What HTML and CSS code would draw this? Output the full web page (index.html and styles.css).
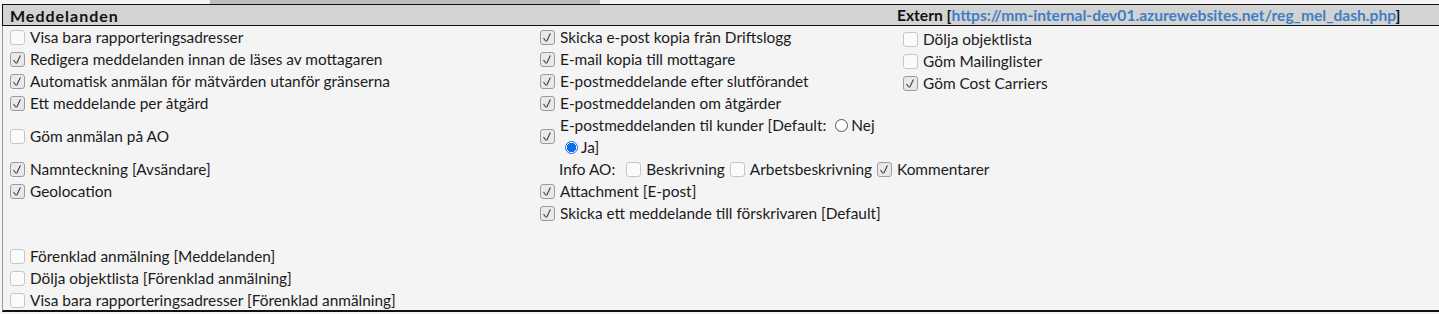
FILE: index.html
```html
<!DOCTYPE html>
<html lang="sv">
<head>
<meta charset="utf-8">
<title>Meddelanden</title>
<link rel="stylesheet" href="styles.css">
</head>
<body>
<div class="topstrip"><span class="tab-left"></span><span class="tab-mid"></span></div>
<section class="panel">
  <div class="panel-head">
    <span class="title">Meddelanden</span>
    <span class="extern">Extern [<a href="#">https://mm-internal-dev01.azurewebsites.net/reg_mel_dash.php</a>]</span>
  </div>
  <div class="panel-body">
    <div class="col c1 r1">
      <label class="item"><span class="cb"></span>Visa bara rapporteringsadresser</label>
      <label class="item"><span class="cb on"></span>Redigera meddelanden innan de läses av mottagaren</label>
      <label class="item"><span class="cb on"></span>Automatisk anmälan för mätvärden utanför gränserna</label>
      <label class="item"><span class="cb on"></span>Ett meddelande per åtgärd</label>
    </div>
    <div class="col c2 r1">
      <label class="item"><span class="cb on"></span>Skicka e-post kopia från Driftslogg</label>
      <label class="item"><span class="cb on"></span>E-mail kopia till mottagare</label>
      <label class="item"><span class="cb on"></span>E-postmeddelande efter slutförandet</label>
      <label class="item"><span class="cb on"></span>E-postmeddelanden om åtgärder</label>
    </div>
    <div class="col c3 r1">
      <label class="item"><span class="cb"></span>Dölja objektlista</label>
      <label class="item"><span class="cb"></span>Göm Mailinglister</label>
      <label class="item"><span class="cb on"></span>Göm Cost Carriers</label>
    </div>

    <div class="col c1 r2 mid">
      <label class="item"><span class="cb"></span>Göm anmälan på AO</label>
    </div>
    <div class="col c2 r2">
      <div class="item multi">
        <span class="cb on"></span>
        <span class="wrap">E-postmeddelanden til kunder [Default: <span class="opt"><span class="radio"></span>Nej</span> <span class="opt"><span class="radio on"></span>Ja]</span></span>
      </div>
    </div>

    <div class="col c1 r3">
      <label class="item"><span class="cb on"></span>Namnteckning [Avsändare]</label>
      <label class="item"><span class="cb on"></span>Geolocation</label>
    </div>
    <div class="col c2 r3">
      <div class="item info"><span class="info-label">Info AO:</span><span class="cb"></span>Beskrivning<span class="cb"></span>Arbetsbeskrivning<span class="cb on"></span>Kommentarer</div>
      <label class="item"><span class="cb on"></span>Attachment [E-post]</label>
      <label class="item"><span class="cb on"></span>Skicka ett meddelande till förskrivaren [Default]</label>
    </div>

    <div class="col c1 r4">
      <label class="item"><span class="cb"></span>Förenklad anmälning [Meddelanden]</label>
      <label class="item"><span class="cb"></span>Dölja objektlista [Förenklad anmälning]</label>
      <label class="item"><span class="cb"></span>Visa bara rapporteringsadresser [Förenklad anmälning]</label>
    </div>
  </div>
</section>
</body>
</html>
```
FILE: styles.css
```css
html, body {
  margin: 0;
  padding: 0;
  background: #f4f4f4;
}
body {
  font-family: Lato, "Open Sans", sans-serif;
  font-size: 15.4px;
  color: #1b1b1b;
  width: 1439px;
  height: 314px;
  overflow: hidden;
}
.topstrip {
  height: 4px;
  display: flex;
}
.tab-left {
  width: 210px;
  background: #f4f4f4;
}
.tab-mid {
  width: 390px;
  background: #bdbdbd;
}
.panel {
  margin-left: 2px;
}
.panel-head {
  height: 20px;
  background: #d3d3d3;
  border-top: 1px solid #111;
  border-bottom: 1px solid #111;
  border-left: 1px solid #111;
  display: flex;
  align-items: center;
  padding-left: 7px;
  font-weight: bold;
  color: #111;
}
.title {
  width: 887px;
  font-size: 16px;
  letter-spacing: 1px;
}
.extern {
  font-size: 15.6px;
}
.extern a {
  color: #3d80c3;
  text-decoration: none;
}
.panel-body {
  border-left: 1px solid #9a9a9a;
  border-bottom: 2px solid #111;
  padding-left: 7px;
  display: grid;
  grid-template-columns: 530px 363px 1fr;
  height: 286px;
  box-sizing: border-box;
  align-content: start;
}
.col { display: flex; flex-direction: column; }
.c1 { grid-column: 1; }
.c2 { grid-column: 2; }
.c3 { grid-column: 3; padding-top: 2px; }
.r1 { grid-row: 1; }
.r2 { grid-row: 2; }
.r3 { grid-row: 3; }
.r4 { grid-row: 4; margin-top: 21px; }
.mid { justify-content: center; }
.item {
  display: flex;
  align-items: center;
  height: 22px;
  white-space: nowrap;
}
.cb {
  width: 13px;
  height: 13px;
  border: 1px solid #c6c6c6;
  border-radius: 3px;
  background: #fbfbfb;
  margin-right: 5px;
  flex: none;
  position: relative;
  box-sizing: content-box;
}
.cb.on {
  background: #e9e9ec;
  border-color: #9b9ba3;
}
.cb.on::after {
  content: "";
  position: absolute;
  left: 3px;
  top: 6px;
  width: 2px;
  height: 4px;
  border-left: 1px solid #333;
  transform: rotate(-35deg);
}
.cb.on::before {
  content: "";
  position: absolute;
  left: 7px;
  top: 2px;
  width: 1px;
  height: 9px;
  background: #333;
  transform: rotate(25deg);
}
.item.multi {
  height: 44px;
}
.wrap {
  white-space: normal;
  width: 330px;
  line-height: 22px;
}
.opt {
  white-space: nowrap;
}
.radio {
  display: inline-block;
  width: 11px;
  height: 11px;
  border: 1px solid #555;
  border-radius: 50%;
  background: #fff;
  margin: 0 3px 0 5px;
  vertical-align: -1px;
  box-sizing: content-box;
}
.radio.on {
  border: 1px solid #0f6fe8;
  background: radial-gradient(circle, #0f6fe8 0 4.5px, #fff 5px);
}
.info .info-label {
  margin-left: 19px;
  margin-right: 6px;
}
.info .cb {
  margin-left: 5px;
}
```
